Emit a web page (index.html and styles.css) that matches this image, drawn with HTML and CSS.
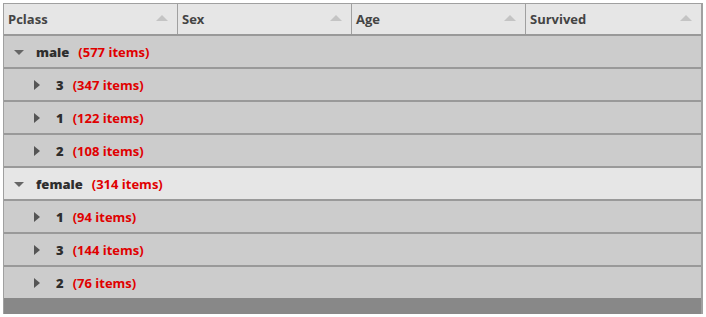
FILE: index.html
```html
<!DOCTYPE html>
<html lang="en">
<head>
    <meta charset="UTF-8">
    <title>Titanic grid</title>
    <link rel="stylesheet" href="styles.css">
</head>
<body>
    <div class="grid">
        <div class="header">
            <div class="col">Pclass<span class="sort"></span></div>
            <div class="col">Sex<span class="sort"></span></div>
            <div class="col">Age<span class="sort"></span></div>
            <div class="col last">Survived<span class="sort"></span></div>
        </div>

        <div class="row group"><span class="down"></span><b>male</b><span class="count">(577 items)</span></div>
        <div class="row sub"><span class="right"></span><b>3</b><span class="count">(347 items)</span></div>
        <div class="row sub"><span class="right"></span><b>1</b><span class="count">(122 items)</span></div>
        <div class="row sub"><span class="right"></span><b>2</b><span class="count">(108 items)</span></div>

        <div class="row group selected"><span class="down"></span><b>female</b><span class="count">(314 items)</span></div>
        <div class="row sub"><span class="right"></span><b>1</b><span class="count">(94 items)</span></div>
        <div class="row sub"><span class="right"></span><b>3</b><span class="count">(144 items)</span></div>
        <div class="row sub last"><span class="right"></span><b>2</b><span class="count">(76 items)</span></div>

        <div class="footer"></div>
    </div>
</body>
</html>
```
FILE: styles.css
```css
body {
    margin: 0;
    padding: 3px 0 0 3px;
    font-family: "Open Sans", "DejaVu Sans", sans-serif;
    font-size: 13px;
    font-weight: bold;
    background: #ffffff;
}

.grid {
    width: 697px;
    border-top: 1px solid #a0a0a0;
    border-left: 1px solid #a0a0a0;
    border-right: 2px solid #a0a0a0;
    background: #cccccc;
}

.header {
    display: flex;
    height: 30px;
    background: #e6e6e6;
    border-bottom: 2px solid #999999;
}

.col {
    border-right: 1px solid #a0a0a0;
    display: flex;
    align-items: center;
    justify-content: space-between;
    padding: 0 9px 0 4px;
    box-sizing: border-box;
    width: 174px;
    color: #444444;
}

.col.last {
    border-right: none;
    width: 175px;
}

.sort {
    width: 0;
    height: 0;
    border-left: 6px solid transparent;
    border-right: 6px solid transparent;
    border-bottom: 6px solid #c4c4c4;
    margin-top: -2px;
}

.row {
    height: 31px;
    display: flex;
    align-items: center;
    border-bottom: 2px solid #999999;
    color: #2e2e2e;
}

.row.last {
    border-bottom: none;
}

.row.selected {
    background: #e6e6e6;
}

.group {
    padding-left: 10px;
}

.sub {
    padding-left: 30px;
}

.down {
    width: 0;
    height: 0;
    border-left: 5px solid transparent;
    border-right: 5px solid transparent;
    border-top: 5px solid #666666;
    margin: 1px 12px 0 0;
}

.right {
    width: 0;
    height: 0;
    border-top: 5px solid transparent;
    border-bottom: 5px solid transparent;
    border-left: 6px solid #555555;
    margin: 1px 16px 0 0;
}

.count {
    color: #e00000;
    margin-left: 9px;
}

.footer {
    height: 16px;
    background: #888888;
}
```
